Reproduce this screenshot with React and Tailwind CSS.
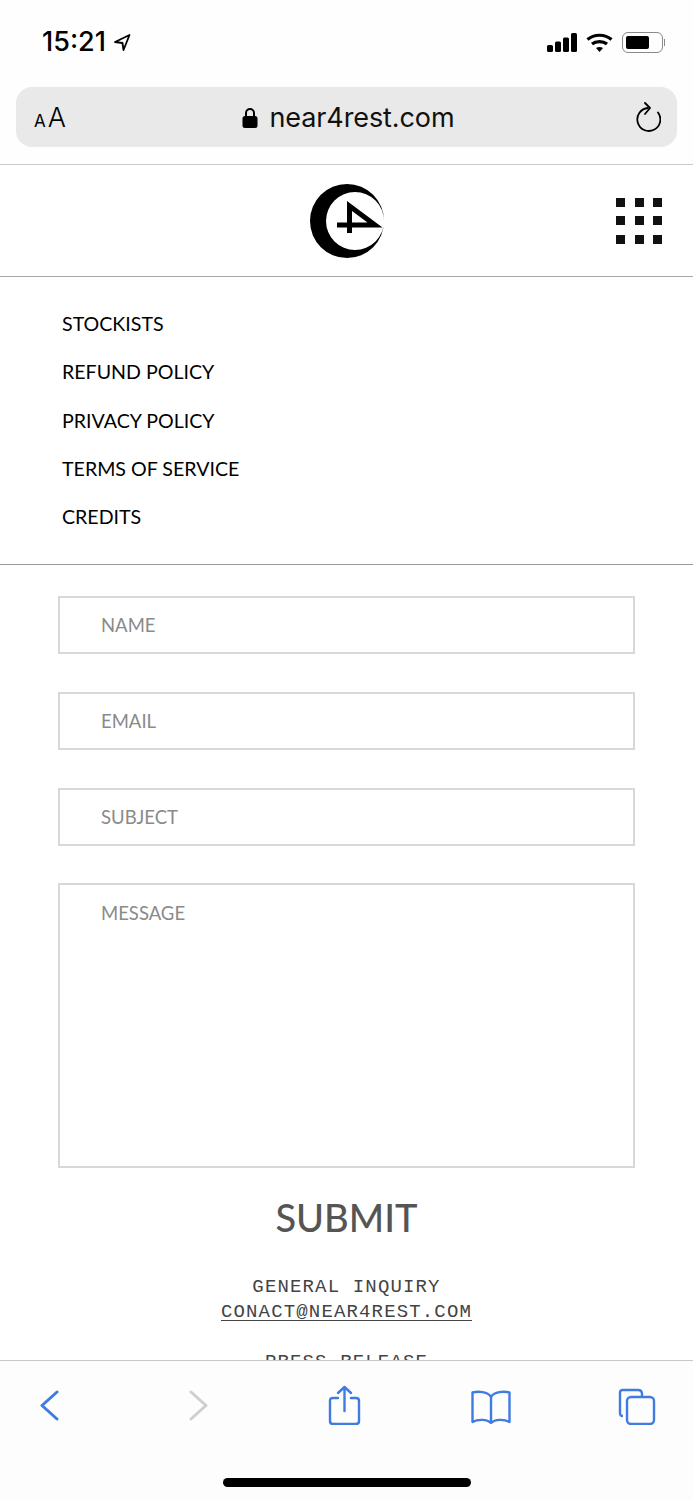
const serifFont = "font-['Lato','Noto_Sans',sans-serif]";

const menuLinks = ["STOCKISTS", "REFUND POLICY", "PRIVACY POLICY", "TERMS OF SERVICE", "CREDITS"];

const StatusBar = () => (
  <div className="flex h-[87px] items-start justify-between bg-[#fefefe] pl-[42px] pr-[28px] pt-[26px]">
    <div className="flex items-center gap-[7px]">
      <span className="font-['Inter',sans-serif] text-[27px] font-medium leading-[32px] text-black">15:21</span>
      <svg width="18" height="19" viewBox="0 0 18 19" fill="none" stroke="black" strokeWidth="1.8" strokeLinejoin="round">
        <path d="M16.5 2 L2 9 L9.5 10 L10.5 17 Z" />
      </svg>
    </div>
    <div className="mt-[6px] flex items-center gap-[9px]">
      <svg width="30" height="19" viewBox="0 0 30 19" fill="black">
        <rect x="0" y="12" width="6" height="7" rx="1.5" />
        <rect x="8" y="8.5" width="6" height="10.5" rx="1.5" />
        <rect x="16" y="4.5" width="6" height="14.5" rx="1.5" />
        <rect x="24" y="0" width="6" height="19" rx="1.5" />
      </svg>
      <svg width="27" height="19" viewBox="0 0 27 19" fill="none" stroke="black" strokeWidth="3.2">
        <path d="M1.5 6.5 C8 0.8 19 0.8 25.5 6.5" />
        <path d="M6 11 C10 7.7 17 7.7 21 11" />
        <path d="M13.5 19 L10 15 C12 13.5 15 13.5 17 15 Z" fill="black" stroke="none" />
      </svg>
      <div className="flex items-center gap-[1px]">
        <div className="flex h-[21px] w-[41px] items-center rounded-[6px] border border-[#8a8a8a] p-[3px]">
          <div className="h-full w-[23px] rounded-[2px] bg-black" />
        </div>
        <div className="h-[7px] w-[1px] bg-[#8a8a8a]" />
      </div>
    </div>
  </div>
);

const UrlBar = () => (
  <div className="bg-[#fefefe] px-4 pb-[17px]">
    <div className="flex h-[60px] items-center justify-between rounded-[16px] bg-[#e9e9e9] pl-[18px] pr-[16px]">
      <div className="flex items-baseline gap-[2px] font-['Inter',sans-serif] text-black">
        <span className="text-[17px] leading-none">A</span>
        <span className="text-[27px] font-light leading-none">A</span>
      </div>
      <div className="flex items-center gap-[11px] pr-[4px] pt-[1px]">
        <svg width="16" height="21" viewBox="0 0 16 21">
          <path d="M4 10 V6 A4 4 0 0 1 12 6 V10" fill="none" stroke="black" strokeWidth="2" />
          <rect x="0.5" y="9" width="15" height="12" rx="2.5" fill="black" />
        </svg>
        <span className="font-['Inter',sans-serif] text-[27px] leading-[32px] tracking-[-0.1px] text-[#111]">near4rest.com</span>
      </div>
      <svg width="26" height="30" viewBox="0 0 26 30" fill="none" stroke="black" strokeWidth="1.8" strokeLinecap="round" strokeLinejoin="round">
        <path d="M13 6 A11.5 11.5 0 1 0 23 10.5" />
        <path d="M10 1 L15 6 L10 12" />
      </svg>
    </div>
  </div>
);

const Logo = () => (
  <svg width="76" height="76" viewBox="0 0 76 76">
    <path
      fillRule="evenodd"
      d="M1 38 A37 37 0 1 1 75 38 A37 37 0 1 1 1 38 Z M17 38 A29 29 0 1 0 75 38 A29 29 0 1 0 17 38 Z"
      fill="black"
    />
    <path d="M28 42 H66 L40.5 23 V50" fill="none" stroke="black" strokeWidth="5" strokeLinejoin="miter" />
  </svg>
);

const GridIcon = () => (
  <div className="grid grid-cols-3 gap-[9.5px]">
    {Array.from({ length: 9 }).map((_, i) => (
      <div key={i} className="h-[9px] w-[9px] bg-[#111]" />
    ))}
  </div>
);

const Field = ({ label }) => (
  <div className={`flex h-[58px] items-center border-2 border-[#d8d8d8] pl-[41px] pt-[2px] text-[18.5px] text-[#8a8a8a] ${serifFont}`}>
    {label}
  </div>
);

const ToolBar = () => (
  <div className="flex h-[140px] shrink-0 flex-col border-t border-[#c8c8c8] bg-[#fdfdfd]">
    <div className="flex h-[89px] items-center pl-[40px]">
      <svg width="19" height="31" viewBox="0 0 19 31" fill="none" stroke="#3f7be0" strokeWidth="3" strokeLinecap="round" strokeLinejoin="round">
        <path d="M17 2 L2 15.5 L17 29" />
      </svg>
      <svg className="ml-[130px]" width="19" height="31" viewBox="0 0 19 31" fill="none" stroke="#cfcfcf" strokeWidth="3" strokeLinecap="round" strokeLinejoin="round">
        <path d="M2 2 L17 15.5 L2 29" />
      </svg>
      <svg className="mb-[2px] ml-[120px]" width="33" height="40" viewBox="0 0 33 40" fill="none" stroke="#3f7be0" strokeWidth="2.4" strokeLinecap="round" strokeLinejoin="round">
        <path d="M10 13 H5 Q2 13 2 16 V36 Q2 39 5 39 H28 Q31 39 31 36 V16 Q31 13 28 13 H23" />
        <path d="M16.5 26 V2 M10 8 L16.5 2 L23 8" />
      </svg>
      <svg className="ml-[110px] mt-[2px]" width="40" height="34" viewBox="0 0 40 34" fill="none" stroke="#3f7be0" strokeWidth="2.4" strokeLinejoin="round">
        <path d="M20 7 C17 1.5 7 1 1.5 2.5 V32 C7 29 16 29 20 33 C24 29 33 29 38.5 32 V2.5 C33 1 23 1.5 20 7 Z" />
        <path d="M20 7 V33" />
      </svg>
      <svg className="ml-[107px] mt-[1px]" width="38" height="37" viewBox="0 0 38 37" fill="none" stroke="#3f7be0" strokeWidth="2.4">
        <path d="M5 28 Q2 28 2 25 V5 Q2 2 5 2 H20 Q24 2 24 6 V9" />
        <rect x="9" y="9" width="27" height="27" rx="4" />
      </svg>
    </div>
    <div className="flex justify-center pt-[28px]">
      <div className="h-[9px] w-[248px] rounded-full bg-black" />
    </div>
  </div>
);

const App = () => {
  return (
    <div className="flex h-[1500px] w-[693px] flex-col overflow-hidden bg-white">
      <div className="flex-1 overflow-hidden">
        <StatusBar />
        <UrlBar />
        <div className="grid h-[113px] grid-cols-[1fr_76px_1fr] items-center border-y border-[#a8a8a8] border-t-[#c8c8c8]">
          <div />
          <Logo />
          <div className="justify-self-end pr-[31px]">
            <GridIcon />
          </div>
        </div>
        <nav className={`flex h-[288px] flex-col gap-[21.3px] border-b border-[#999] pl-[62px] pt-[33px] text-[19.6px] leading-[27px] text-black ${serifFont}`}>
          {menuLinks.map((link) => (
            <a key={link}>{link}</a>
          ))}
        </nav>
        <form className="flex flex-col gap-[38px] px-[58px] pt-[31px]">
          <Field label="NAME" />
          <Field label="EMAIL" />
          <Field label="SUBJECT" />
          <div className={`-mt-px h-[285px] border-2 border-[#d8d8d8] pl-[41px] pt-[15px] text-[18.5px] leading-[26px] text-[#8a8a8a] ${serifFont}`}>
            MESSAGE
          </div>
        </form>
        <div className={`mt-[24px] text-center text-[38px] font-medium leading-[50px] text-[#555] ${serifFont}`}>SUBMIT</div>
        <div className="mt-[33px] text-center font-['Liberation_Mono',monospace] text-[19px] leading-[25px] tracking-[1.15px] text-[#444]">
          <p>GENERAL INQUIRY</p>
          <p className="underline underline-offset-[3px]">CONACT@NEAR4REST.COM</p>
          <p className="mt-[25px]">PRESS RELEASE</p>
        </div>
      </div>
      <ToolBar />
    </div>
  );
};

export default App;
